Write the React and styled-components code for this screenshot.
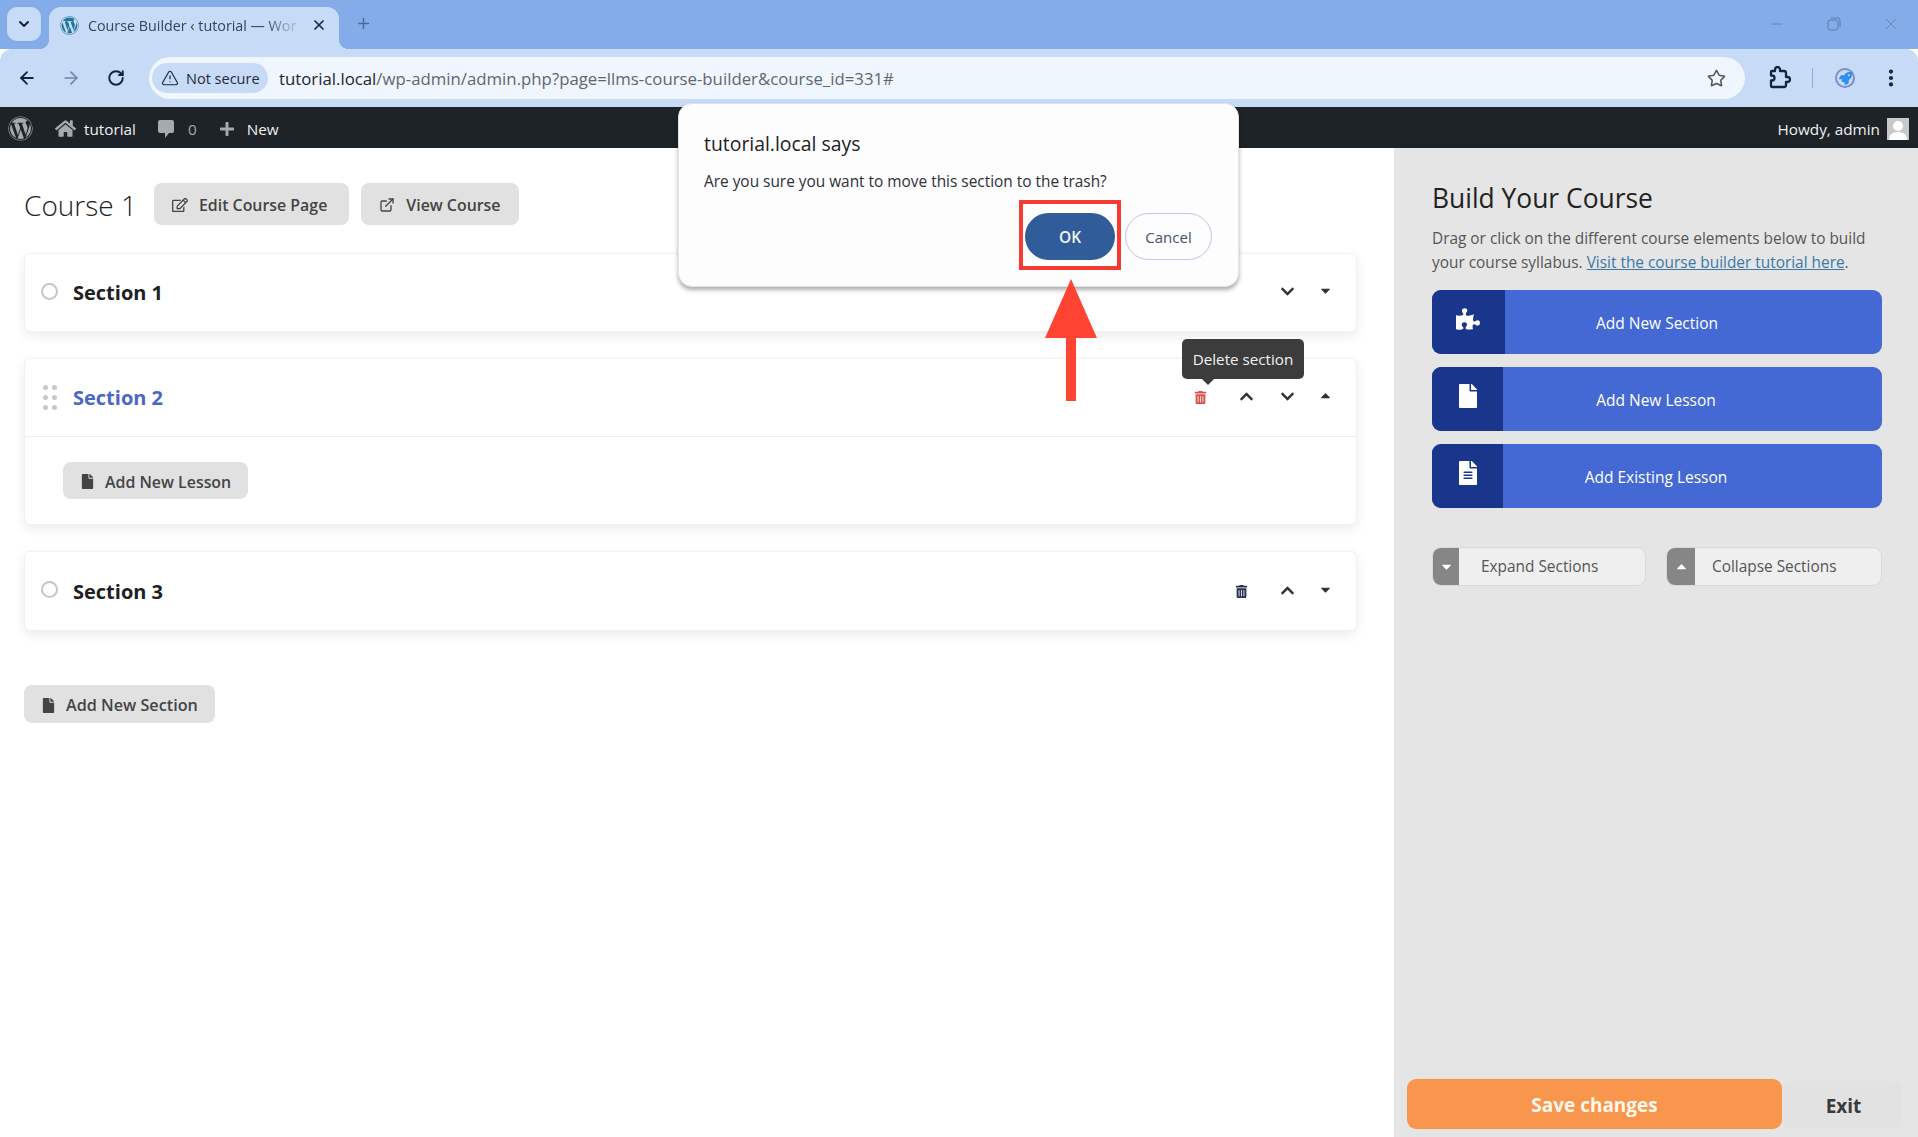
import React from "react";
import styled, { createGlobalStyle } from "styled-components";
import {
  ArrowLeft,
  ArrowRight,
  ChevronDown,
  EllipsisVertical,
  ExternalLink,
  Minus,
  Plus,
  RotateCw,
  Star,
  TriangleAlert,
  X,
} from "lucide-react";
import {
  FaCaretDown,
  FaCaretUp,
  FaChevronDown,
  FaChevronUp,
  FaFile,
  FaFileAlt,
  FaHome,
  FaPlus,
  FaPuzzlePiece,
  FaRegEdit,
  FaRocket,
  FaTrashAlt,
  FaWordpress,
} from "react-icons/fa";

const GlobalStyle = createGlobalStyle`
  html, body {
    margin: 0;
    padding: 0;
    height: 100%;
    overflow: hidden;
    background: #fff;
    font-family: "Open Sans", "Liberation Sans", sans-serif;
  }
  #root { height: 100%; }
  * { box-sizing: border-box; }
`;

const Page = styled.div`
  position: relative;
  height: 1137px;
  display: flex;
  flex-direction: column;
  overflow: hidden;
`;

/* browser chrome */

const TabStrip = styled.div`
  height: 49px;
  flex: none;
  display: flex;
  align-items: flex-start;
  padding: 7px 0 0 7px;
  background: #84ace9;
  color: #4a6a9c;
`;

const TabMenu = styled.div`
  width: 34px;
  height: 34px;
  border-radius: 10px;
  background: #c8dbf6;
  color: #14233c;
  display: flex;
  align-items: center;
  justify-content: center;
`;

const Tab = styled.div`
  position: relative;
  width: 290px;
  height: 42px;
  margin-left: 8px;
  padding: 0 12px 6px 11px;
  display: flex;
  align-items: center;
  background: #c8dbf6;
  border-radius: 12px 12px 0 0;
  color: #1c2b40;

  &::before,
  &::after {
    content: "";
    position: absolute;
    bottom: 0;
    width: 10px;
    height: 10px;
  }
  &::before {
    left: -10px;
    background: radial-gradient(circle at 0 0, transparent 10px, #c8dbf6 10.5px);
  }
  &::after {
    right: -10px;
    background: radial-gradient(circle at 100% 0, transparent 10px, #c8dbf6 10.5px);
  }
`;

const TabTitle = styled.span`
  flex: 1;
  margin: 0 12px 0 9px;
  white-space: nowrap;
  font-size: 14.3px;
  color: #33445c;
  -webkit-mask-image: linear-gradient(90deg, #000 84%, rgba(0, 0, 0, 0.25) 96%);
  mask-image: linear-gradient(90deg, #000 84%, rgba(0, 0, 0, 0.25) 96%);
`;

const NewTab = styled.div`
  margin: 8px 0 0 16px;
  display: flex;
`;

const WindowControls = styled.div`
  margin-left: auto;
  padding: 8px 18px 0 0;
  display: flex;
  gap: 39px;
  color: #5a7bac;
`;

const Toolbar = styled.div`
  height: 58px;
  flex: none;
  display: flex;
  align-items: center;
  padding: 0 16px 0 17px;
  background: #c8dbf6;
  border-radius: 12px 12px 0 0;
  color: #15243a;
`;

const NavButton = styled.div`
  width: ${(p) => p.$width || 45}px;
  display: flex;
  color: ${(p) => p.$color || "#15243a"};
`;

const Omnibox = styled.div`
  width: 1596px;
  height: 42px;
  margin-left: -6px;
  padding: 0 19px 0 3px;
  display: flex;
  align-items: center;
  background: #f0f6fd;
  border-radius: 21px;
`;

const SecurityChip = styled.div`
  width: 116px;
  height: 30px;
  flex: none;
  display: flex;
  align-items: center;
  gap: 7px;
  padding-left: 9px;
  border-radius: 15px;
  background: #c8dbf6;
  font-size: 14.5px;
  color: #1e2a3a;
`;

const Url = styled.div`
  flex: 1;
  margin-left: 11px;
  font-size: 16.8px;
  color: #5f6672;
  white-space: nowrap;

  b {
    font-weight: 400;
    color: #1b2533;
  }
`;

const ExtensionArea = styled.div`
  flex: 1;
  display: flex;
  align-items: center;
  padding-left: 22px;
`;

const ToolbarDivider = styled.div`
  width: 1px;
  height: 20px;
  margin: 0 22px 0 21px;
  background: #8eaed8;
`;

const RocketBadge = styled.div`
  width: 20px;
  height: 20px;
  border-radius: 50%;
  border: 2px solid #7a8fc9;
  display: flex;
  align-items: center;
  justify-content: center;
  color: #2f8fef;
`;

const Dots = styled.div`
  margin-left: auto;
  display: flex;
`;

/* wp admin bar */

const AdminBar = styled.div`
  height: 41px;
  flex: none;
  display: flex;
  align-items: center;
  padding: 2px 9px 0 8px;
  background: #1d2327;
  color: #f0f0f1;
  font-size: 15.3px;
`;

const AdminItem = styled.div`
  display: flex;
  align-items: center;
  gap: ${(p) => p.$gap || 8}px;
  margin-left: ${(p) => p.$offset || 0}px;
  color: ${(p) => p.$color || "#f0f0f1"};

  svg {
    color: #a7aaad;
    flex: none;
  }
`;

const Howdy = styled.div`
  margin-left: auto;
  display: flex;
  align-items: center;
  gap: 7px;
`;

const Avatar = styled.div`
  width: 22px;
  height: 22px;
  background: #c9c9c9;
  overflow: hidden;
  display: flex;
`;

/* builder layout */

const Main = styled.div`
  flex: 1;
  min-height: 0;
  display: flex;
`;

const Builder = styled.div`
  width: 1394px;
  flex: none;
  padding: 35px 37px 0 24px;
  background: #fff;
`;

const TitleRow = styled.div`
  height: 42px;
  display: flex;
  align-items: center;
  margin-bottom: 28px;
`;

const CourseTitle = styled.h1`
  width: 130px;
  margin: 0;
  padding-top: 2px;
  font-size: 28px;
  font-weight: 300;
  color: #222;
  white-space: nowrap;
`;

const GreyButton = styled.div`
  height: ${(p) => p.$height || 42}px;
  display: inline-flex;
  align-items: center;
  gap: ${(p) => p.$gap || 11}px;
  margin-right: 12px;
  padding: 2px ${(p) => p.$right || 22}px 0 ${(p) => p.$left || 18}px;
  border-radius: 8px;
  background: #e1e1e1;
  color: #444;
  font-size: ${(p) => p.$size || 15.9}px;
  font-weight: 600;
  white-space: nowrap;
`;

const Card = styled.div`
  margin-bottom: ${(p) => p.$gap || 26}px;
  background: #fff;
  border: 1px solid #f1f1f1;
  border-radius: 6px;
  box-shadow: 0 4px 12px rgba(0, 0, 0, 0.08);
`;

const CardHeader = styled.div`
  height: ${(p) => p.$height || 77}px;
  display: flex;
  align-items: center;
  padding: 0 13px 0 16px;
  border-bottom: ${(p) => (p.$open ? "1px solid #ececec" : "none")};
`;

const Radio = styled.div`
  width: 17px;
  height: 17px;
  margin-top: -3px;
  border: 2px solid #c6c6c6;
  border-radius: 50%;
`;

const DragHandle = styled.div`
  width: 17px;
  display: grid;
  grid-template-columns: 5px 5px;
  justify-content: center;
  gap: 5px 4px;

  span {
    width: 5px;
    height: 5px;
    border-radius: 50%;
    background: #c8c8c8;
  }
`;

const SectionTitle = styled.div`
  margin-left: 15px;
  font-size: 20px;
  font-weight: 700;
  color: ${(p) => (p.$active ? "#4a66c8" : "#202020")};
`;

const Actions = styled.div`
  margin-left: auto;
  display: flex;
  align-items: center;
`;

const Action = styled.div`
  position: relative;
  width: ${(p) => p.$width}px;
  height: 20px;
  padding-bottom: ${(p) => p.$raise || 0}px;
  display: flex;
  align-items: center;
  justify-content: center;
  color: ${(p) => p.$color || "#333"};
`;

const Tooltip = styled.div`
  position: absolute;
  top: -49px;
  left: 7px;
  width: 122px;
  height: 40px;
  display: flex;
  align-items: center;
  justify-content: center;
  border-radius: 5px;
  background: #3c3c3c;
  color: #f2f2f2;
  font-size: 15.2px;
  white-space: nowrap;

  &::after {
    content: "";
    position: absolute;
    left: 19px;
    bottom: -6px;
    border: 7px solid transparent;
    border-bottom: 0;
    border-top-color: #3c3c3c;
  }
`;

const CardBody = styled.div`
  padding: 25px 0 25px 38px;
`;

/* right panel */

const Panel = styled.div`
  flex: 1;
  display: flex;
  flex-direction: column;
  background: #e5e5e5;
`;

const PanelContent = styled.div`
  flex: 1;
  padding: 32px 36px 0 38px;
`;

const PanelTitle = styled.h2`
  margin: 0 0 11px;
  font-size: 26.4px;
  line-height: 36px;
  font-weight: 500;
  color: #222;
  white-space: nowrap;
`;

const PanelText = styled.p`
  margin: 0 0 15px;
  font-size: 15.4px;
  line-height: 24px;
  color: #555;
  white-space: nowrap;

  a {
    color: #3a78a8;
    text-decoration: underline;
  }
`;

const ElementButton = styled.div`
  height: 64px;
  margin-bottom: 13px;
  display: flex;
  overflow: hidden;
  border-radius: 9px;
  background: #4469d4;
  color: #fff;
  font-size: 15.5px;
`;

const ElementIcon = styled.div`
  width: ${(p) => p.$width || 71}px;
  flex: none;
  padding: 17px 0 0 24px;
  background: #1a368c;
`;

const ElementLabel = styled.div`
  flex: 1;
  display: flex;
  align-items: center;
  justify-content: center;
  padding: 2px 73px 0 0;
`;

const ToggleRow = styled.div`
  display: grid;
  grid-template-columns: 214px 216px;
  justify-content: space-between;
  margin-top: 39px;
`;

const ToggleButton = styled.div`
  height: 39px;
  display: flex;
  align-items: center;
  overflow: hidden;
  border: 1px solid #d9d9d9;
  border-radius: 9px;
  background: #efefef;
  color: #555;
  font-size: 15.4px;
`;

const ToggleIcon = styled.div`
  width: ${(p) => p.$width}px;
  height: 100%;
  flex: none;
  margin-right: ${(p) => p.$gap}px;
  display: flex;
  align-items: center;
  justify-content: center;
  background: #868686;
  color: #fff;
`;

const PanelFooter = styled.div`
  display: flex;
  align-items: flex-end;
  padding: 0 16px 8px 13px;
`;

const SaveButton = styled.div`
  width: 375px;
  height: 50px;
  padding-top: 2px;
  display: flex;
  align-items: center;
  justify-content: center;
  border-radius: 9px;
  background: #f9964d;
  color: #fff6ec;
  font-size: 19px;
  font-weight: 700;
`;

const ExitButton = styled.div`
  flex: 1;
  height: 48px;
  padding: 2px 0 0 3px;
  display: flex;
  align-items: center;
  justify-content: center;
  border-radius: 9px;
  background: #e2e2e2;
  color: #3a3a3a;
  font-size: 19px;
  font-weight: 700;
`;

/* alert dialog and the tutorial annotation over it */

const Dialog = styled.div`
  position: absolute;
  top: 103px;
  left: 678px;
  width: 561px;
  height: 184px;
  padding: 27px 26px 0 25px;
  background: #fdfdfe;
  border: 1px solid #e4e4e8;
  border-radius: 14px;
  box-shadow: 0 3px 4px rgba(0, 0, 0, 0.32);
`;

const DialogTitle = styled.div`
  font-size: 19.4px;
  line-height: 26px;
  color: #1d1d24;
`;

const DialogText = styled.div`
  margin-top: 14px;
  font-size: 15.4px;
  line-height: 22px;
  color: #2f2f36;
  white-space: nowrap;
`;

const DialogButtons = styled.div`
  display: flex;
  justify-content: flex-end;
  gap: 10px;
  margin-top: 20px;
`;

const OkWrap = styled.div`
  position: relative;
`;

const OkButton = styled.div`
  width: 90px;
  height: 47px;
  display: flex;
  align-items: center;
  justify-content: center;
  border-radius: 24px;
  background: #315c9a;
  color: #f2f6fc;
  font-size: 15.5px;
  font-weight: 600;
`;

const CancelButton = styled.div`
  width: 87px;
  height: 47px;
  display: flex;
  align-items: center;
  justify-content: center;
  border: 1px solid #bcc8de;
  border-radius: 24px;
  color: #45526d;
  font-size: 15px;
`;

const Highlight = styled.div`
  position: absolute;
  inset: -13px -6px -10px;
  border: 4px solid #f53a32;
`;

const ArrowMark = styled.svg`
  position: absolute;
  top: 279px;
  left: 1045px;
`;

const sections = [
  { title: "Section 1", actions: ["down", "caretDown"] },
  { title: "Section 3", actions: ["trash", "up", "caretDown"] },
];

const ActionIcon = ({ kind }) => {
  if (kind === "trash") {
    return (
      <Action $width={51} $color="#2a3350">
        <FaTrashAlt size={13} />
      </Action>
    );
  }
  if (kind === "up") {
    return (
      <Action $width={41} $raise={2}>
        <FaChevronUp size={15} />
      </Action>
    );
  }
  if (kind === "down") {
    return (
      <Action $width={41} $raise={2}>
        <FaChevronDown size={15} />
      </Action>
    );
  }
  return (
    <Action $width={35} $raise={4}>
      {kind === "caretUp" ? <FaCaretUp size={15} /> : <FaCaretDown size={15} />}
    </Action>
  );
};

const ClosedSection = ({ title, actions, gap, height }) => (
  <Card $gap={gap}>
    <CardHeader $height={height}>
      <Radio />
      <SectionTitle>{title}</SectionTitle>
      <Actions>
        {actions.map((kind) => (
          <ActionIcon key={kind} kind={kind} />
        ))}
      </Actions>
    </CardHeader>
  </Card>
);

const App = () => (
  <Page>
    <GlobalStyle />

    <TabStrip>
      <TabMenu>
        <ChevronDown size={16} strokeWidth={3} />
      </TabMenu>
      <Tab>
        <FaWordpress size={19} color="#21759b" />
        <TabTitle>Course Builder ‹ tutorial — Wor</TabTitle>
        <X size={16} strokeWidth={2.6} />
      </Tab>
      <NewTab>
        <Plus size={17} strokeWidth={2} />
      </NewTab>
      <WindowControls>
        <Minus size={18} strokeWidth={1} />
        <svg width="18" height="18" viewBox="0 0 18 18" fill="none" stroke="currentColor">
          <rect x="3" y="5" width="10" height="10" rx="2" />
          <path d="M6 3h7a2 2 0 0 1 2 2v7" />
        </svg>
        <X size={18} strokeWidth={1} />
      </WindowControls>
    </TabStrip>

    <Toolbar>
      <NavButton $width={44}>
        <ArrowLeft size={20} strokeWidth={2.2} />
      </NavButton>
      <NavButton $width={46} $color="#6e87a8">
        <ArrowRight size={20} strokeWidth={2} />
      </NavButton>
      <NavButton $width={48}>
        <RotateCw size={18} strokeWidth={2.6} />
      </NavButton>
      <Omnibox>
        <SecurityChip>
          <TriangleAlert size={18} strokeWidth={1.6} />
          Not secure
        </SecurityChip>
        <Url>
          <b>tutorial.local</b>/wp-admin/admin.php?page=llms-course-builder&amp;course_id=331#
        </Url>
        <Star size={19} strokeWidth={2} color="#555" />
      </Omnibox>
      <ExtensionArea>
        <svg width="24" height="24" viewBox="0 0 24 24" fill="none" stroke="#15243a" strokeWidth="2.3" strokeLinejoin="round">
          <path d="M20.5 11H19V7a2 2 0 0 0-2-2h-4V3.5a2.5 2.5 0 0 0-5 0V5H5a1 1 0 0 0-1 1v3.5h1a2.5 2.5 0 0 1 0 5H4V20a1 1 0 0 0 1 1h12a2 2 0 0 0 2-2v-3h1.5a2.5 2.5 0 0 0 0-5z" />
        </svg>
        <ToolbarDivider />
        <RocketBadge>
          <FaRocket size={13} />
        </RocketBadge>
        <Dots>
          <EllipsisVertical size={22} strokeWidth={2.6} />
        </Dots>
      </ExtensionArea>
    </Toolbar>

    <AdminBar>
      <AdminItem>
        <FaWordpress size={25} />
      </AdminItem>
      <AdminItem $offset={22}>
        <FaHome size={21} />
        tutorial
      </AdminItem>
      <AdminItem $offset={21} $gap={13} $color="#a7aaad">
        <svg width="18" height="20" viewBox="0 0 18 20" fill="#a7aaad">
          <path d="M3 1h12a2 2 0 0 1 2 2v9a2 2 0 0 1-2 2h-3l-4 5v-5H3a2 2 0 0 1-2-2V3a2 2 0 0 1 2-2z" />
        </svg>
        0
      </AdminItem>
      <AdminItem $offset={22} $gap={12}>
        <FaPlus size={16} />
        New
      </AdminItem>
      <Howdy>
        Howdy, admin
        <Avatar>
          <svg width="22" height="22" viewBox="0 0 22 22" fill="#fff">
            <circle cx="11" cy="8" r="5" />
            <path d="M2 22c0-6 4-8 9-8s9 2 9 8z" />
          </svg>
        </Avatar>
      </Howdy>
    </AdminBar>

    <Main>
      <Builder>
        <TitleRow>
          <CourseTitle>Course 1</CourseTitle>
          <GreyButton>
            <FaRegEdit size={16} />
            Edit Course Page
          </GreyButton>
          <GreyButton $right={18}>
            <ExternalLink size={16} />
            View Course
          </GreyButton>
        </TitleRow>

        <ClosedSection {...sections[0]} />

        <Card>
          <CardHeader $open $height={78}>
            <DragHandle>
              {[0, 1, 2, 3, 4, 5].map((dot) => (
                <span key={dot} />
              ))}
            </DragHandle>
            <SectionTitle $active>Section 2</SectionTitle>
            <Actions>
              <Action $width={51} $color="#d6504c">
                <FaTrashAlt size={13} />
                <Tooltip>Delete section</Tooltip>
              </Action>
              <ActionIcon kind="up" />
              <ActionIcon kind="down" />
              <ActionIcon kind="caretUp" />
            </Actions>
          </CardHeader>
          <CardBody>
            <GreyButton $height={37} $left={17} $right={17} $gap={10}>
              <FaFile size={15} />
              Add New Lesson
            </GreyButton>
          </CardBody>
        </Card>

        <ClosedSection {...sections[1]} gap={54} height={78} />

        <GreyButton $height={38} $left={17} $right={17} $gap={10} $size={16.2}>
          <FaFile size={15} />
          Add New Section
        </GreyButton>
      </Builder>

      <Panel>
        <PanelContent>
          <PanelTitle>Build Your Course</PanelTitle>
          <PanelText>
            Drag or click on the different course elements below to build
            <br />
            your course syllabus. <a href="#tutorial">Visit the course builder tutorial here</a>.
          </PanelText>

          <ElementButton>
            <ElementIcon $width={73}>
              <FaPuzzlePiece size={24} />
            </ElementIcon>
            <ElementLabel>Add New Section</ElementLabel>
          </ElementButton>
          <ElementButton>
            <ElementIcon>
              <FaFile size={24} />
            </ElementIcon>
            <ElementLabel>Add New Lesson</ElementLabel>
          </ElementButton>
          <ElementButton>
            <ElementIcon>
              <FaFileAlt size={24} />
            </ElementIcon>
            <ElementLabel>Add Existing Lesson</ElementLabel>
          </ElementButton>

          <ToggleRow>
            <ToggleButton>
              <ToggleIcon $width={26} $gap={22}>
                <FaCaretDown size={15} />
              </ToggleIcon>
              Expand Sections
            </ToggleButton>
            <ToggleButton>
              <ToggleIcon $width={28} $gap={17}>
                <FaCaretUp size={15} />
              </ToggleIcon>
              Collapse Sections
            </ToggleButton>
          </ToggleRow>
        </PanelContent>

        <PanelFooter>
          <SaveButton>Save changes</SaveButton>
          <ExitButton>Exit</ExitButton>
        </PanelFooter>
      </Panel>
    </Main>

    <Dialog>
      <DialogTitle>tutorial.local says</DialogTitle>
      <DialogText>Are you sure you want to move this section to the trash?</DialogText>
      <DialogButtons>
        <OkWrap>
          <OkButton>OK</OkButton>
          <Highlight />
        </OkWrap>
        <CancelButton>Cancel</CancelButton>
      </DialogButtons>
    </Dialog>

    <ArrowMark width="52" height="122" viewBox="0 0 52 122">
      <polygon points="26,0 52,59 31,59 31,122 21,122 21,59 0,59" fill="#ff4433" />
    </ArrowMark>
  </Page>
);

export default App;
